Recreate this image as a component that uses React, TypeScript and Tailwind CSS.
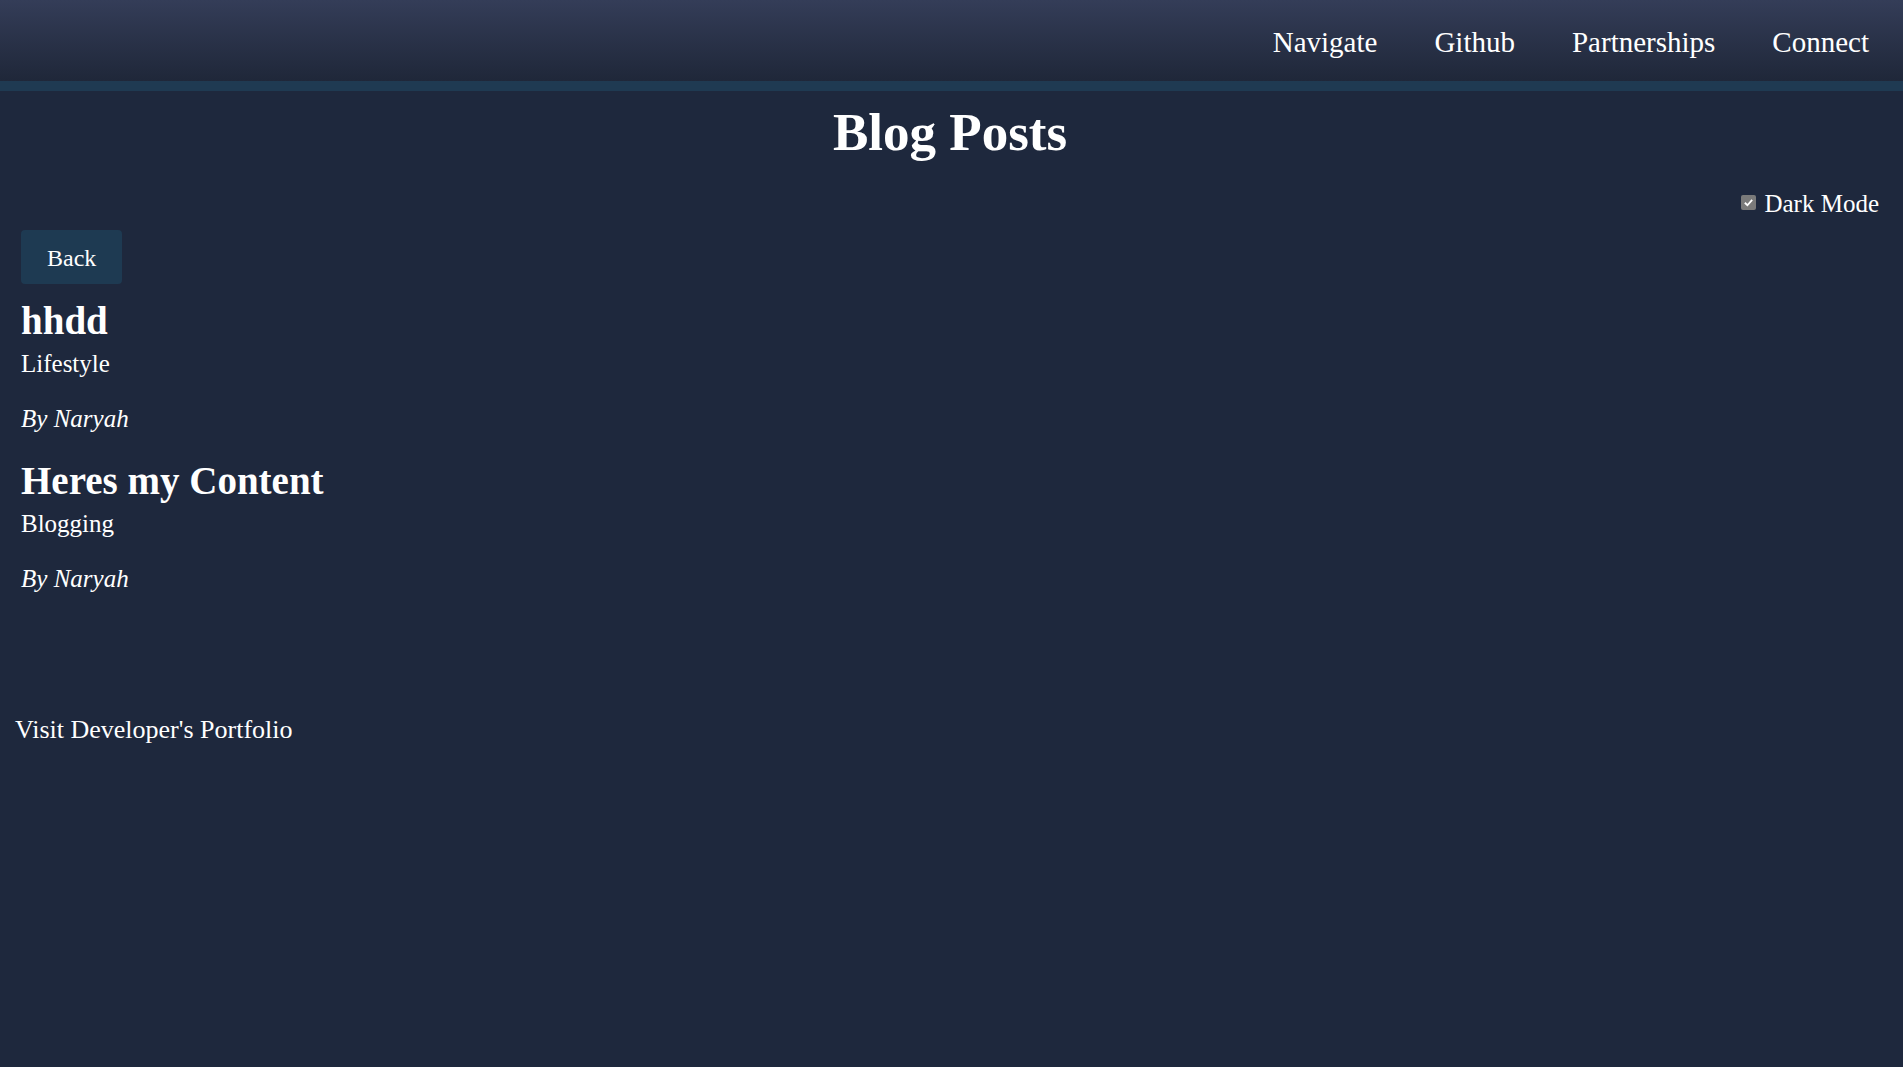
import React from "react"

const navLinks = ["Navigate", "Github", "Partnerships", "Connect"]

const posts = [
  { title: "hhdd", category: "Lifestyle", author: "Naryah" },
  { title: "Heres my Content", category: "Blogging", author: "Naryah" },
]

export default function App() {
  return (
    <div className="min-h-screen bg-[#1e283d] text-white font-['Liberation_Serif',serif]">
      {/* ── HEADER ── */}
      <header className="h-[81px] bg-gradient-to-b from-[#343d58] to-[#1f2739] flex items-center justify-end pr-[34px] gap-[57px]">
        {navLinks.map((link) => (
          <a key={link} href="#" className="text-[29px] leading-[30px] mt-[2px] text-white">
            {link}
          </a>
        ))}
      </header>
      <div className="h-[10px] bg-[#1f3a52]" />

      {/* ── CONTENT ── */}
      <main className="pl-[21px] pr-[24px]">
        <h1 className="text-[53px] leading-[60px] font-bold text-center mt-[11px]">Blog Posts</h1>

        <div className="flex justify-end mt-[27px]">
          <label className="flex items-center gap-[8px] text-[25px] leading-[30px]">
            <span className="w-[15px] h-[15px] rounded-[2px] bg-[#7a7a7a] flex items-center justify-center mt-[-3px]">
              <svg viewBox="0 0 12 12" className="w-[11px] h-[11px]">
                <path d="M2 6.3 L4.8 9 L10 3.2" fill="none" stroke="white" strokeWidth="2" />
              </svg>
            </span>
            Dark Mode
          </label>
        </div>

        <button className="mt-[11px] h-[54px] px-[26px] pt-[2px] rounded-[4px] bg-[#1e3a52] text-[24px] leading-[52px] text-white">
          Back
        </button>

        <div className="mt-[15px]">
          {posts.map((post, i) => (
            <div key={post.title} className={i > 0 ? "mt-[25px]" : ""}>
              <h2 className="text-[39px] leading-[44px] font-bold">{post.title}</h2>
              <p className="text-[25px] leading-[30px] mt-[6px]">{post.category}</p>
              <p className="text-[25px] leading-[30px] italic mt-[25px]">By {post.author}</p>
            </div>
          ))}
        </div>
      </main>

      {/* ── FOOTER ── */}
      <footer className="pl-[15px] mt-[121px]">
        <a href="#" className="text-[26px] leading-[30px] text-white">
          Visit Developer's Portfolio
        </a>
      </footer>
    </div>
  )
}
